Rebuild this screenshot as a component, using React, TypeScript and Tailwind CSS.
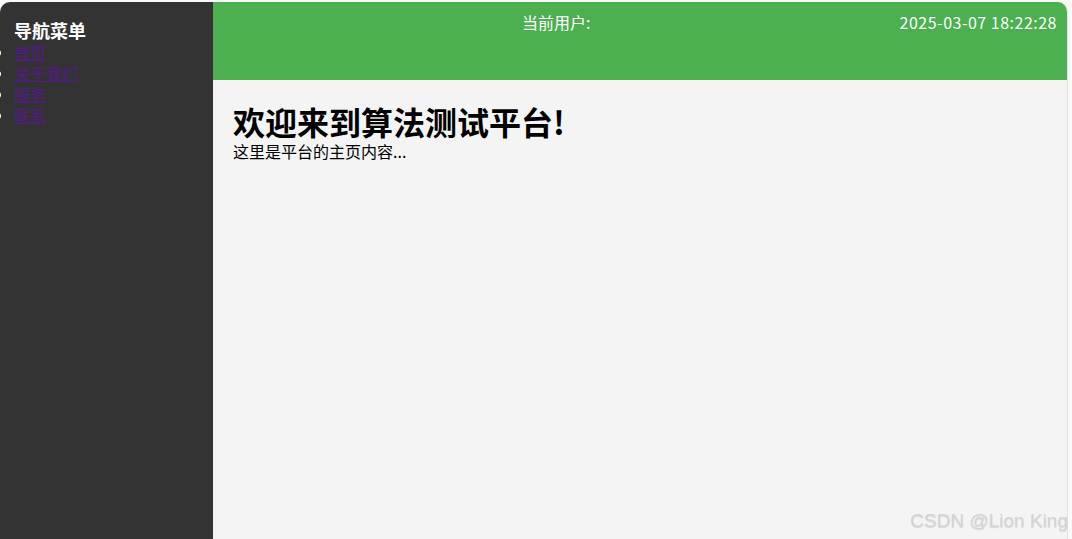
import React from "react";

const font = '"Noto Sans CJK SC", "Noto Sans", sans-serif';

export default function App() {
  return (
    <div className="w-[1072px] h-[539px] bg-[#fafafa] pt-[2px] pr-[4px] overflow-hidden relative" style={{ fontFamily: font }}>
      <div className="flex h-full rounded-t-[10px] overflow-hidden border-r border-[#e2e2e2]">
        {/* sidebar */}
        <aside className="w-[213px] shrink-0 bg-[#333333] text-white px-[14px] pt-[16px]">
          <h3 className="text-[18px] font-bold leading-[24px]">导航菜单</h3>
          <ul className="list-disc pl-0 text-[16px] leading-[21px]">
            <li><a href="#" className="text-[#551a8b] underline">首页</a></li>
            <li><a href="#" className="text-[#551a8b] underline">关于我们</a></li>
            <li><a href="#" className="text-[#551a8b] underline">服务</a></li>
            <li><a href="#" className="text-[#551a8b] underline">联系</a></li>
          </ul>
        </aside>

        {/* main */}
        <div className="flex-1 flex flex-col bg-[#f4f4f4]">
          <header className="h-[78px] bg-[#4caf50] text-white flex justify-between items-start pt-[9px] px-[10px] text-[16px] leading-[22px]">
            <div />
            <div className="mr-[10px]">当前用户:</div>
            <div className="tracking-[0.5px]">2025-03-07 18:22:28</div>
          </header>
          <main className="px-[20px] pt-[20px] text-black">
            <h1 className="text-[32px] font-bold leading-[42px]">欢迎来到算法测试平台!</h1>
            <p className="text-[16px] leading-[18px]">这里是平台的主页内容...</p>
          </main>
        </div>
      </div>

      <div
        className="absolute right-[4px] bottom-[4px] text-[19px] text-[#d4d4d4]"
        style={{ fontFamily: '"Liberation Sans", Arial, sans-serif', textShadow: "0 1px 1px rgba(0,0,0,0.12)" }}
      >
        CSDN @Lion King
      </div>
    </div>
  );
}
